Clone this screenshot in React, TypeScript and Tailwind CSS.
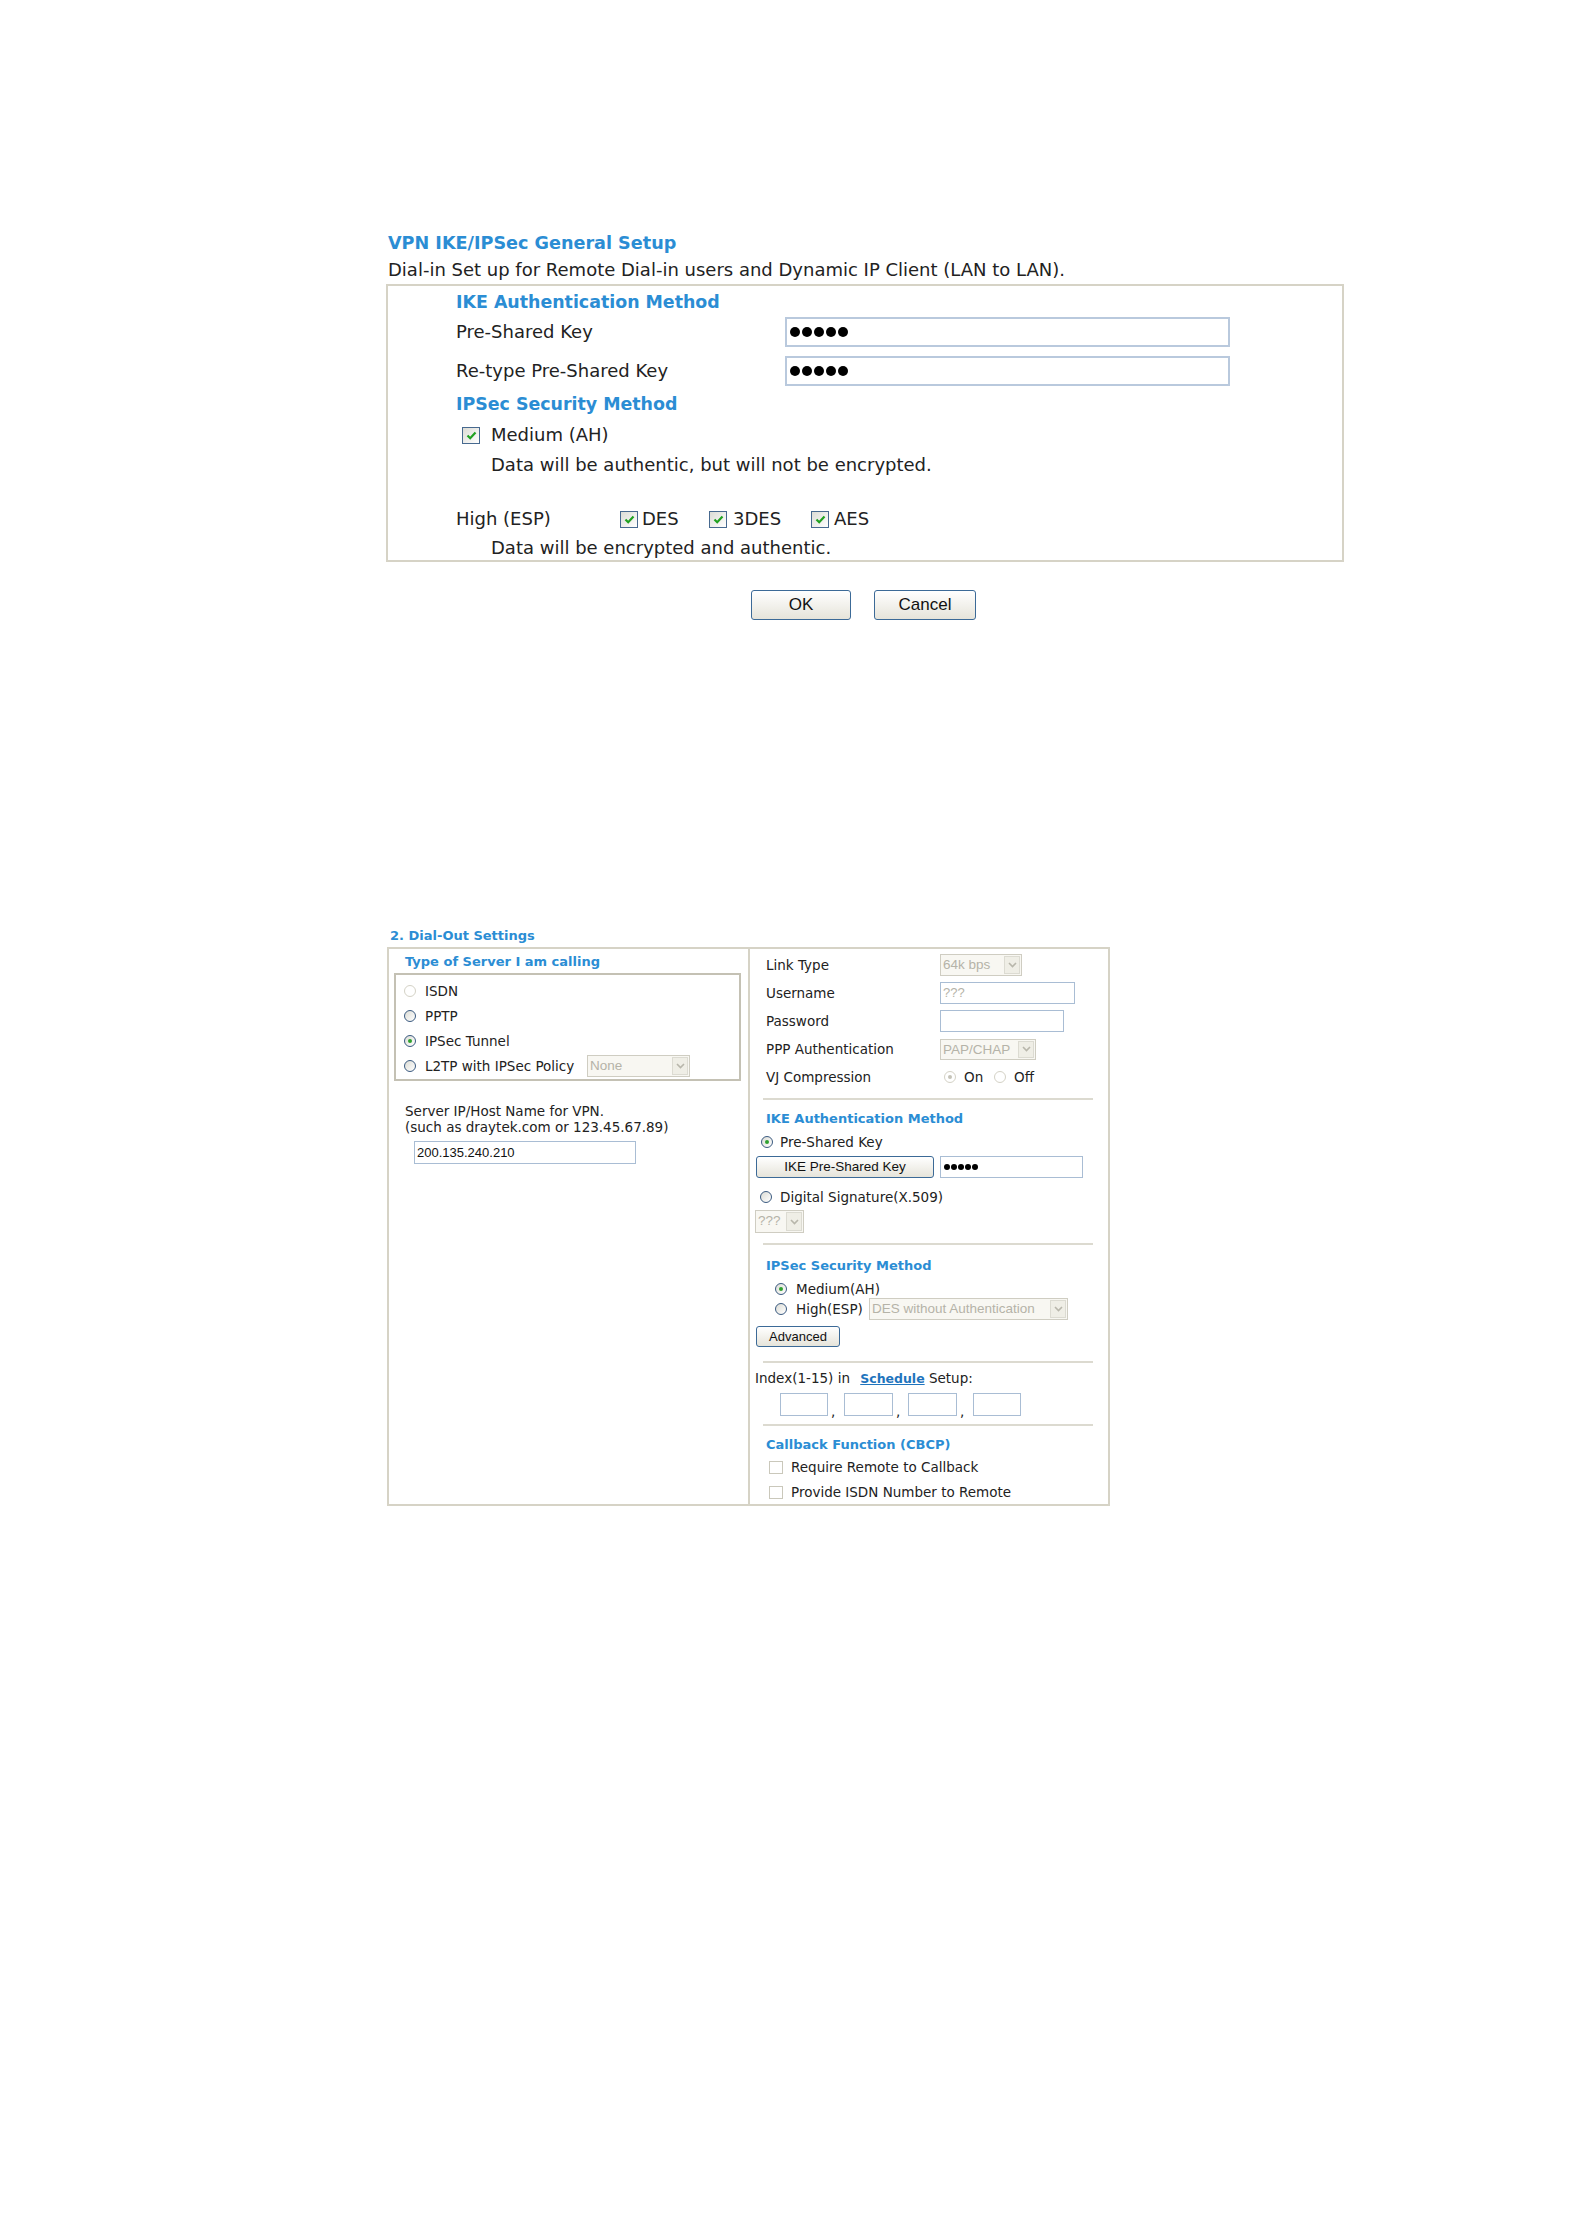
import React from "react";

function Dots() {
  return (
    <div className="flex gap-[2px] pl-[3px]">
      {[0, 1, 2, 3, 4].map((i) => (
        <span key={i} className="block w-[10px] h-[10px] rounded-full bg-black" />
      ))}
    </div>
  );
}

function SmallDots() {
  return (
    <div className="flex gap-[1px] pl-[3px]">
      {[0, 1, 2, 3, 4].map((i) => (
        <span key={i} className="block w-[6px] h-[6px] rounded-full bg-black" />
      ))}
    </div>
  );
}

function CheckBig() {
  return (
    <span className="flex shrink-0 items-center justify-center w-[18px] h-[17px] border border-[#47698f] bg-linear-to-br from-[#dcdcd5] to-white">
      <svg width="11" height="11" viewBox="0 0 11 11">
        <path d="M1.5 5.5 L4.2 8.2 L9.5 2.5" fill="none" stroke="#21a121" strokeWidth="2.2" />
      </svg>
    </span>
  );
}

function CheckSmall() {
  return <span className="block w-[14px] h-[13px] border border-[#cac8bb] bg-white" />;
}

function Radio({ checked, disabled }: { checked?: boolean; disabled?: boolean }) {
  return (
    <span
      className={
        disabled
          ? "relative block shrink-0 w-[12px] h-[12px] rounded-full border border-[#d4d2c6] bg-white"
          : "relative block shrink-0 w-[12px] h-[12px] rounded-full border border-[#3a5a80] bg-linear-to-br from-[#dcdcd5] to-white"
      }
    >
      {checked && (
        <span
          className={
            disabled
              ? "absolute left-[3px] top-[3px] w-[4px] h-[4px] rounded-full bg-[#c5c3b8]"
              : "absolute left-[3px] top-[3px] w-[4px] h-[4px] rounded-full bg-[#2fa12f]"
          }
        />
      )}
    </span>
  );
}

function Select({ text, w, h = 22 }: { text: string; w: number; h?: number }) {
  return (
    <div
      className="flex shrink-0 border border-[#cfcdc2] bg-[#f8f7f2] font-['Liberation_Sans',Arial,sans-serif] text-[13.5px] text-[#b5b3a8]"
      style={{ width: w, height: h }}
    >
      <span className="flex-1 pl-[2px] leading-[20px] overflow-hidden whitespace-nowrap">{text}</span>
      <span className="flex items-center justify-center w-[16px] m-[1px] bg-[#efeee6] border border-[#dcdbd2]">
        <svg width="9" height="6" viewBox="0 0 9 6">
          <path d="M1 1 L4.5 4.5 L8 1" fill="none" stroke="#b8b6ab" strokeWidth="1.6" />
        </svg>
      </span>
    </div>
  );
}

function XpButton({ label, w, h, cls }: { label: string; w: number; h: number; cls: string }) {
  return (
    <div
      className={
        "flex items-center justify-center rounded-[3px] border border-[#3c6a97] bg-linear-to-b from-white to-[#e6e4da] font-['Liberation_Sans',Arial,sans-serif] text-[#111] " +
        cls
      }
      style={{ width: w, height: h }}
    >
      {label}
    </div>
  );
}

function Field({ w, h, children }: { w: number; h: number; children?: React.ReactNode }) {
  return (
    <div
      className="flex shrink-0 items-center border border-[#a9bdd4] bg-white font-['Liberation_Sans',Arial,sans-serif] text-[13px] text-[#111]"
      style={{ width: w, height: h }}
    >
      {children}
    </div>
  );
}

export default function App() {
  return (
    <div className="w-[1576px] h-[2230px] bg-white font-['DejaVu_Sans',Verdana,sans-serif] text-[#222]">
      {/* VPN IKE/IPSec General Setup */}
      <div className="pt-[232px] pl-[386px]">
        <div className="w-[958px]">
          <div className="pl-[2px] text-[17.6px] leading-[22px] font-bold text-[#2b8dd4]">
            VPN IKE/IPSec General Setup
          </div>
          <div className="mt-[5px] pl-[2px] text-[18px] leading-[22px]">
            Dial-in Set up for Remote Dial-in users and Dynamic IP Client (LAN to LAN).
          </div>
          <div className="mt-[3px] border-2 border-[#d6d3c6] pt-[5px] pb-[1px] pl-[68px] text-[18px] leading-[22px]">
            <div className="text-[17.4px] font-bold text-[#2b8dd4]">IKE Authentication Method</div>
            <div className="mt-[4px] flex items-center h-[30px]">
              <span className="w-[329px]">Pre-Shared Key</span>
              <div className="flex items-center w-[445px] h-[30px] border-2 border-[#b9c9dd]">
                <Dots />
              </div>
            </div>
            <div className="mt-[9px] flex items-center h-[30px]">
              <span className="w-[329px]">Re-type Pre-Shared Key</span>
              <div className="flex items-center w-[445px] h-[30px] border-2 border-[#b9c9dd]">
                <Dots />
              </div>
            </div>
            <div className="mt-[7px] text-[17.4px] font-bold text-[#2b8dd4]">IPSec Security Method</div>
            <div className="mt-[9px] flex items-center h-[22px] pl-[6px] gap-[11px]">
              <CheckBig />
              <span>Medium (AH)</span>
            </div>
            <div className="mt-[8px] pl-[35px]">Data will be authentic, but will not be encrypted.</div>
            <div className="mt-[32px] flex items-center h-[22px]">
              <span className="w-[164px]">High (ESP)</span>
              <div className="w-[89px] flex items-center gap-[4px]">
                <CheckBig />
                <span>DES</span>
              </div>
              <div className="w-[102px] flex items-center gap-[6px]">
                <CheckBig />
                <span>3DES</span>
              </div>
              <div className="flex items-center gap-[5px]">
                <CheckBig />
                <span>AES</span>
              </div>
            </div>
            <div className="mt-[7px] pl-[35px]">Data will be encrypted and authentic.</div>
          </div>
        </div>
        <div className="mt-[28px] ml-[365px] flex gap-[23px]">
          <XpButton label="OK" w={100} h={30} cls="text-[17px]" />
          <XpButton label="Cancel" w={102} h={30} cls="text-[17px]" />
        </div>
      </div>

      {/* 2. Dial-Out Settings */}
      <div className="mt-[308px] pl-[387px]">
        <div className="pl-[3px] text-[13px] leading-[16px] font-bold text-[#2b8dd4]">2. Dial-Out Settings</div>
        <div className="mt-[3px] w-[723px] flex border-2 border-[#d6d3c6] text-[13.5px] leading-[16px]">
          {/* left column */}
          <div className="w-[359px] pt-[5px]">
            <div className="pl-[16px] text-[13px] font-bold text-[#2b8dd4]">Type of Server I am calling</div>
            <div className="mt-[3px] ml-[5px] w-[347px] border-2 border-[#c4c1b4] pt-[3px] pb-[1px] pl-[8px]">
              <div className="flex items-center h-[25px] gap-[9px]">
                <Radio disabled />
                <span>ISDN</span>
              </div>
              <div className="flex items-center h-[25px] gap-[9px]">
                <Radio />
                <span>PPTP</span>
              </div>
              <div className="flex items-center h-[25px] gap-[9px]">
                <Radio checked />
                <span>IPSec Tunnel</span>
              </div>
              <div className="flex items-center h-[25px] gap-[9px]">
                <Radio />
                <span className="w-[153px] whitespace-nowrap">L2TP with IPSec Policy</span>
                <Select text="None" w={103} />
              </div>
            </div>
            <div className="mt-[22px] pl-[16px]">
              <div>Server IP/Host Name for VPN.</div>
              <div>(such as draytek.com or 123.45.67.89)</div>
            </div>
            <div className="mt-[6px] ml-[25px]">
              <Field w={222} h={23}>
                <span className="pl-[2px]">200.135.240.210</span>
              </Field>
            </div>
          </div>

          {/* right column */}
          <div className="flex-1 border-l-2 border-[#d6d3c6] pt-[2px] pb-[3px]">
            <div className="flex items-center h-[28px] pl-[16px]">
              <span className="w-[174px]">Link Type</span>
              <Select text="64k bps" w={82} />
            </div>
            <div className="flex items-center h-[28px] pl-[16px]">
              <span className="w-[174px]">Username</span>
              <Field w={135} h={22}>
                <span className="pl-[2px] text-[#b5b3a8]">???</span>
              </Field>
            </div>
            <div className="flex items-center h-[28px] pl-[16px]">
              <span className="w-[174px]">Password</span>
              <Field w={124} h={22} />
            </div>
            <div className="flex items-center h-[28px] pl-[16px]">
              <span className="w-[174px]">PPP Authentication</span>
              <Select text="PAP/CHAP" w={96} h={21} />
            </div>
            <div className="flex items-center h-[28px] pl-[16px]">
              <span className="w-[178px]">VJ Compression</span>
              <Radio checked disabled />
              <span className="ml-[8px] w-[30px]">On</span>
              <Radio disabled />
              <span className="ml-[8px]">Off</span>
            </div>
            <div className="mt-[7px] ml-[13px] mr-[15px] h-[2px] bg-[#dcdad0]" />

            <div className="mt-[11px] pl-[16px] text-[13px] font-bold text-[#2b8dd4]">IKE Authentication Method</div>
            <div className="mt-[6px] flex items-center h-[18px] pl-[11px] gap-[7px]">
              <Radio checked />
              <span>Pre-Shared Key</span>
            </div>
            <div className="mt-[5px] flex pl-[6px] gap-[6px]">
              <XpButton label="IKE Pre-Shared Key" w={178} h={22} cls="text-[13.5px]" />
              <Field w={143} h={22}>
                <SmallDots />
              </Field>
            </div>
            <div className="mt-[10px] flex items-center h-[18px] pl-[10px] gap-[8px]">
              <Radio />
              <span>Digital Signature(X.509)</span>
            </div>
            <div className="mt-[4px] pl-[5px]">
              <Select text="???" w={49} h={23} />
            </div>
            <div className="mt-[10px] ml-[13px] mr-[15px] h-[2px] bg-[#dcdad0]" />

            <div className="mt-[13px] pl-[16px] text-[13px] font-bold text-[#2b8dd4]">IPSec Security Method</div>
            <div className="mt-[6px] flex items-center h-[18px] pl-[25px] gap-[9px]">
              <Radio checked />
              <span>Medium(AH)</span>
            </div>
            <div className="flex items-center h-[22px] pl-[25px]">
              <Radio />
              <span className="ml-[9px] w-[73px] whitespace-nowrap">High(ESP)</span>
              <Select text="DES without Authentication" w={199} />
            </div>
            <div className="mt-[6px] pl-[6px]">
              <XpButton label="Advanced" w={84} h={21} cls="text-[13px]" />
            </div>
            <div className="mt-[14px] ml-[13px] mr-[15px] h-[2px] bg-[#dcdad0]" />

            <div className="mt-[7px] pl-[5px] whitespace-nowrap">
              Index(1-15) in{" "}
              <span className="ml-[6px] text-[12.5px] font-bold text-[#1f74bd] underline">Schedule</span> Setup:
            </div>
            <div className="mt-[6px] flex items-end pl-[30px]">
              <Field w={48} h={23} />
              <span className="w-[16px] pl-[3px] leading-[10px]">,</span>
              <Field w={49} h={23} />
              <span className="w-[15px] pl-[3px] leading-[10px]">,</span>
              <Field w={49} h={23} />
              <span className="w-[16px] pl-[3px] leading-[10px]">,</span>
              <Field w={48} h={23} />
            </div>
            <div className="mt-[8px] ml-[13px] mr-[15px] h-[2px] bg-[#dcdad0]" />

            <div className="mt-[11px] pl-[16px] text-[13px] font-bold text-[#2b8dd4]">Callback Function (CBCP)</div>
            <div className="mt-[5px] flex items-center h-[18px] pl-[19px] gap-[8px]">
              <CheckSmall />
              <span>Require Remote to Callback</span>
            </div>
            <div className="mt-[7px] flex items-center h-[18px] pl-[19px] gap-[8px]">
              <CheckSmall />
              <span>Provide ISDN Number to Remote</span>
            </div>
          </div>
        </div>
      </div>
    </div>
  );
}
